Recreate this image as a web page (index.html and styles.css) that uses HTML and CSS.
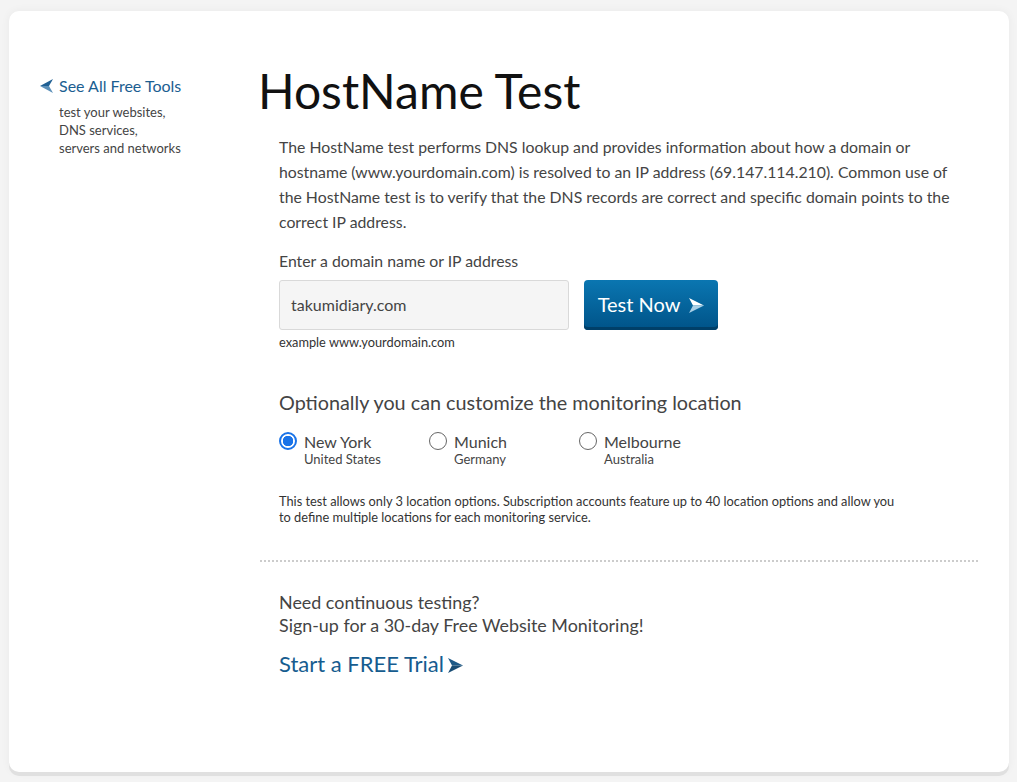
FILE: index.html
```html
<!DOCTYPE html>
<html lang="en">
<head>
<meta charset="utf-8">
<title>HostName Test</title>
<link rel="stylesheet" href="styles.css">
</head>
<body>
<div class="card">
  <aside class="sidebar">
    <a class="back-link" href="#">
      <svg class="back-icon" width="14" height="14" viewBox="0 0 14 14"><polygon points="0,7 13,0 9,7" fill="#1f5f93"/><polygon points="0,7 9,7 13,14" fill="#5b8fb8"/></svg>
      See All Free Tools
    </a>
    <p class="side-text">test your websites,<br>DNS services,<br>servers and networks</p>
  </aside>
  <main class="main">
    <h1 class="title">HostName Test</h1>
    <div class="content">
      <p class="intro">The HostName test performs DNS lookup and provides information about how a domain or hostname (www.yourdomain.com) is resolved to an IP address (69.147.114.210). Common use of the HostName test is to verify that the DNS records are correct and specific domain points to the correct IP address.</p>
      <label class="field-label">Enter a domain name or IP address</label>
      <div class="form-row">
        <div class="input-box">takumidiary.com</div>
        <button class="btn">Test Now
          <svg class="btn-icon" width="15" height="15" viewBox="0 0 15 15"><polygon points="0,0 15,7.5 4,7.5" fill="#ffffff"/><polygon points="4,7.5 15,7.5 0,15" fill="#a9cfe6"/></svg>
        </button>
      </div>
      <div class="hint">example www.yourdomain.com</div>
      <h2 class="subhead">Optionally you can customize the monitoring location</h2>
      <div class="locations">
        <div class="loc"><span class="radio checked"></span><div><div class="loc-name">New York</div><div class="loc-sub">United States</div></div></div>
        <div class="loc"><span class="radio"></span><div><div class="loc-name">Munich</div><div class="loc-sub">Germany</div></div></div>
        <div class="loc"><span class="radio"></span><div><div class="loc-name">Melbourne</div><div class="loc-sub">Australia</div></div></div>
      </div>
      <p class="note">This test allows only 3 location options. Subscription accounts feature up to 40 location options and allow you<br>to define multiple locations for each monitoring service.</p>
    </div>
    <hr class="divider">
    <div class="content promo">
      <p class="promo-text">Need continuous testing?<br>Sign-up for a 30-day Free Website Monitoring!</p>
      <a class="trial" href="#">Start a FREE Trial<svg class="trial-icon" width="15" height="15" viewBox="0 0 15 15"><polygon points="0,0 15,7.5 4,7.5" fill="#1d5a88"/><polygon points="4,7.5 15,7.5 0,15" fill="#184d75"/></svg></a>
    </div>
  </main>
</div>
</body>
</html>
```

FILE: styles.css
```css
html, body {
  margin: 0;
  padding: 0;
}
body {
  background: #f4f4f4;
  font-family: Lato, "Open Sans", sans-serif;
  color: #444;
  padding: 11px 8px 10px 9px;
}
.card {
  background: #fff;
  width: 1000px;
  height: 761px;
  border-radius: 10px;
  box-shadow: 0 4px 0 #e0e0e0, 0 0 10px rgba(0,0,0,0.05);
  display: flex;
  box-sizing: border-box;
}
.sidebar {
  width: 251px;
  flex: none;
  box-sizing: border-box;
  padding: 65px 0 0 31px;
}
.back-link {
  display: flex;
  align-items: center;
  gap: 5px;
  color: #1b5e91;
  text-decoration: none;
  font-size: 16px;
  line-height: 20px;
}
.back-icon { flex: none; margin-top: -1px; }
.side-text {
  margin: 7px 0 0 19px;
  font-size: 13px;
  line-height: 18px;
  color: #444;
}
.main {
  flex: 1;
  padding: 0 31px 0 0;
}
.title {
  margin: 50px 0 0 -2px;
  font-size: 48px;
  font-weight: 400;
  color: #111;
  line-height: 60px;
}
.content {
  padding-left: 19px;
}
.intro {
  margin: 13px 0 0 0;
  font-size: 15.8px;
  line-height: 25px;
  max-width: 680px;
}
.field-label {
  display: block;
  margin-top: 17px;
  font-size: 15.8px;
  line-height: 20px;
}
.form-row {
  display: flex;
  gap: 15px;
  margin-top: 9px;
}
.input-box {
  width: 290px;
  height: 50px;
  box-sizing: border-box;
  background: #f5f5f5;
  border: 1px solid #d9d9d9;
  border-radius: 3px;
  padding: 0 11px;
  font-size: 16px;
  line-height: 48px;
  color: #444;
}
.btn {
  width: 134px;
  height: 50px;
  border: none;
  border-radius: 4px;
  background: linear-gradient(#0a76b1, #005388);
  box-shadow: inset 0 -3px 0 #003f68;
  color: #fff;
  font-family: Lato, sans-serif;
  font-size: 20px;
  display: flex;
  align-items: center;
  justify-content: center;
  gap: 9px;
  padding: 0 0 2px 0;
}
.btn-icon { margin-top: 3px; }
.hint {
  margin-top: 4px;
  font-size: 12.8px;
  line-height: 16px;
  color: #333;
}
.subhead {
  margin: 39px 0 0 0;
  font-size: 19.8px;
  font-weight: 400;
  line-height: 26px;
  color: #444;
}
.locations {
  display: flex;
  margin-top: 17px;
}
.loc {
  width: 150px;
  display: flex;
  gap: 7px;
  align-items: flex-start;
}
.radio {
  width: 18px;
  height: 18px;
  box-sizing: border-box;
  border-radius: 50%;
  border: 1px solid #666;
  flex: none;
  margin-top: 0;
}
.radio.checked {
  border: 2px solid #1a73e8;
  background: radial-gradient(circle, #1a73e8 0 5px, #fff 5.5px);
}
.loc-name {
  font-size: 16px;
  line-height: 19px;
  color: #444;
}
.loc-sub {
  font-size: 13px;
  line-height: 16px;
  color: #444;
}
.note {
  margin: 26px 0 0 0;
  font-size: 12.8px;
  line-height: 16px;
  color: #333;
}
.divider {
  border: none;
  border-top: 2px dotted #ccc;
  margin: 35px 0 0 0;
}
.promo-text {
  margin: 29px 0 0 0;
  font-size: 17.9px;
  line-height: 23px;
  color: #444;
}
.trial {
  display: inline-flex;
  align-items: center;
  gap: 4px;
  margin-top: 14px;
  font-size: 22px;
  line-height: 26px;
  color: #165c8f;
  text-decoration: none;
}
.trial-icon { margin-top: 3px; }
```
